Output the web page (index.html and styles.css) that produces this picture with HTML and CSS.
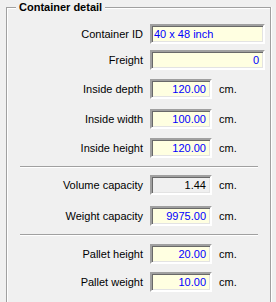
FILE: index.html
```html
<!DOCTYPE html>
<html>
<head>
<meta charset="utf-8">
<link rel="stylesheet" href="styles.css">
</head>
<body>
<fieldset class="group">
  <legend class="title">Container detail</legend>
  <div class="row r1"><span class="label">Container ID</span><span class="field wide left">40 x 48 inch</span></div>
  <div class="row r2"><span class="label">Freight</span><span class="field wide">0</span></div>
  <div class="row r3"><span class="label">Inside depth</span><span class="field">120.00</span><span class="unit">cm.</span></div>
  <div class="row r4"><span class="label">Inside width</span><span class="field">100.00</span><span class="unit">cm.</span></div>
  <div class="row r5"><span class="label">Inside height</span><span class="field">120.00</span><span class="unit">cm.</span></div>
  <div class="sep s1"></div>
  <div class="row r6"><span class="label">Volume capacity</span><span class="field readonly">1.44</span><span class="unit">cm.</span></div>
  <div class="row r7"><span class="label">Weight capacity</span><span class="field">9975.00</span><span class="unit">cm.</span></div>
  <div class="sep s2"></div>
  <div class="row r8"><span class="label">Pallet height</span><span class="field">20.00</span><span class="unit">cm.</span></div>
  <div class="row r9"><span class="label">Pallet weight</span><span class="field">10.00</span><span class="unit">cm.</span></div>
</fieldset>
</body>
</html>
```

FILE: styles.css
```css
html, body {
  margin: 0;
  padding: 0;
  background: #f0f0f0;
  font-family: "Liberation Sans", Arial, sans-serif;
  font-size: 11px;
  color: #000;
  overflow: hidden;
}
.group {
  margin: 0 0 0 6px;
  padding: 0 0 20px 0;
  width: 263px;
  border: 1px solid #a0a0a0;
  border-bottom: none;
  box-shadow: inset 1px 1px 0 #fff, 1px 0 0 #fff;
  min-width: 0;
}
.title {
  margin-left: 9px;
  padding: 0 3px;
  font-weight: bold;
  font-size: 11px;
  line-height: 14px;
  background: #f0f0f0;
}
.row {
  display: flex;
  align-items: center;
  height: 20px;
}
.label {
  width: 136px;
  text-align: right;
  margin-right: 6px;
  flex: none;
  white-space: nowrap;
}
.field {
  box-sizing: border-box;
  width: 62px;
  height: 20px;
  line-height: 16px;
  padding: 0 4px 0 2px;
  border: 2px solid;
  border-color: #a0a0a0 #fff #fff #a0a0a0;
  box-shadow: inset 1px 1px 0 #696969, inset -1px -1px 0 #e3e3e3;
  background: #ffffe1;
  color: #0000ff;
  text-align: right;
  flex: none;
  margin-left: 1px;
}
.field.wide { width: 115px; }
.field.left { text-align: left; }
.field.readonly { background: #f0f0f0; color: #000; }
.unit { margin-left: 7px; }
.r1 { margin-top: 10px; }
.r2 { margin-top: 6px; }
.r3 { margin-top: 9px; }
.r4 { margin-top: 10px; }
.r5 { margin-top: 9px; }
.sep {
  margin-left: 13px;
  width: 238px;
  height: 0;
  border-top: 1px solid #a0a0a0;
  border-bottom: 1px solid #fff;
}
.s1 { margin-top: 8px; }
.r6 { margin-top: 7px; }
.r7 { margin-top: 11px; }
.s2 { margin-top: 8px; }
.r8 { margin-top: 8px; }
.r9 { margin-top: 8px; }
```
